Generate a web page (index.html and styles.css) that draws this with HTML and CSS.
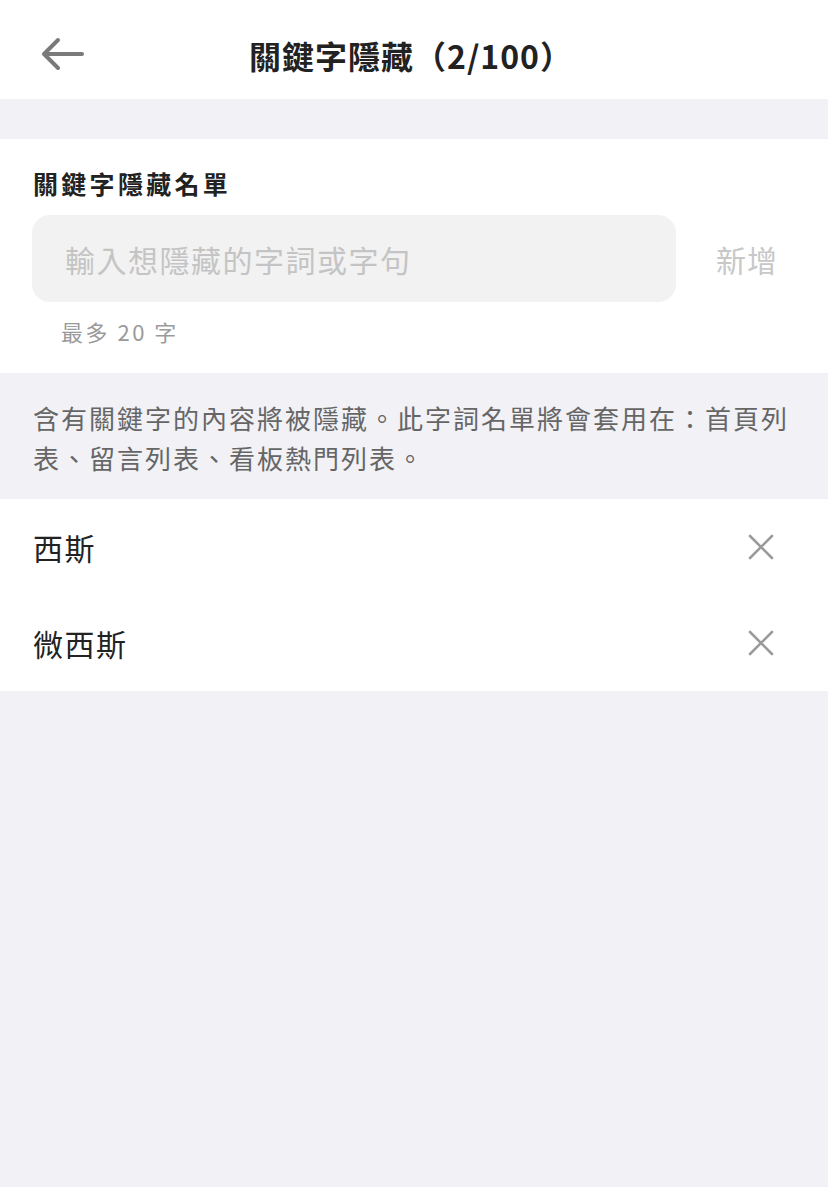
FILE: index.html
```html
<!DOCTYPE html>
<html lang="zh-Hant">
<head>
    <meta charset="UTF-8">
    <meta name="viewport" content="width=device-width, initial-scale=1.0">
    <title>關鍵字隱藏</title>
    <link rel="stylesheet" href="styles.css">
</head>
<body>
    <header class="nav-bar">
        <button class="back-btn" aria-label="返回">
            <svg width="44" height="34" viewBox="0 0 44 34" fill="none" stroke="#7a7a7a" stroke-width="4" stroke-linecap="round" stroke-linejoin="round">
                <path d="M41 17H4"/>
                <path d="M17 3L3 17l14 14"/>
            </svg>
        </button>
        <h1 class="nav-title">關鍵字隱藏（2/100）</h1>
    </header>

    <div class="spacer"></div>

    <section class="keyword-form">
        <label class="form-label" for="keywordInput">關鍵字隱藏名單</label>
        <div class="input-row">
            <input type="text" id="keywordInput" class="keyword-input" placeholder="輸入想隱藏的字詞或字句">
            <button class="add-btn">新增</button>
        </div>
        <p class="hint">最多 20 字</p>
    </section>

    <p class="description">含有關鍵字的內容將被隱藏。此字詞名單將會套用在：首頁列表、留言列表、看板熱門列表。</p>

    <ul class="keyword-list">
        <li class="keyword-item">
            <span>西斯</span>
            <button class="remove-btn" aria-label="刪除">
                <svg width="26" height="26" viewBox="0 0 26 26" stroke="#9a9a9a" stroke-width="2.6" stroke-linecap="round">
                    <path d="M2 2l22 22M24 2L2 24"/>
                </svg>
            </button>
        </li>
        <li class="keyword-item">
            <span>微西斯</span>
            <button class="remove-btn" aria-label="刪除">
                <svg width="26" height="26" viewBox="0 0 26 26" stroke="#9a9a9a" stroke-width="2.6" stroke-linecap="round">
                    <path d="M2 2l22 22M24 2L2 24"/>
                </svg>
            </button>
        </li>
    </ul>
</body>
</html>
```

FILE: styles.css
```css
body {
    margin: 0;
    min-height: 100vh;
    background-color: #f1f1f6;
    font-family: "Noto Sans CJK TC", "Noto Sans", sans-serif;
    color: #222;
}
button {
    font-family: inherit;
    background: none;
    border: none;
    padding: 0;
    cursor: pointer;
}
.nav-bar {
    position: relative;
    height: 99px;
    background-color: #fff;
    display: flex;
    align-items: center;
    justify-content: center;
}
.back-btn {
    position: absolute;
    left: 41px;
    top: 37px;
    display: flex;
}
.nav-title {
    margin: 0 0 0 -6px;
    font-size: 32px;
    font-weight: 700;
    color: #222;
    line-height: 40px;
    padding-top: 10px;
    letter-spacing: 1px;
}
.spacer {
    height: 40px;
}
.keyword-form {
    background-color: #fff;
    padding: 26px 0 27px;
}
.form-label {
    display: block;
    padding-left: 33px;
    font-size: 25px;
    font-weight: 700;
    line-height: 36px;
    letter-spacing: 3.3px;
    color: #222;
}
.input-row {
    display: flex;
    align-items: center;
    gap: 40px;
    margin-top: 14px;
    padding: 0 50px 0 32px;
}
.keyword-input {
    flex: 1;
    min-width: 0;
    height: 87px;
    box-sizing: border-box;
    border: none;
    border-radius: 18px;
    background-color: #f2f2f2;
    padding: 0 20px 0 33px;
    font-family: inherit;
    font-size: 30px;
    letter-spacing: 1.5px;
    color: #222;
    outline: none;
}
.keyword-input::placeholder {
    color: #c4c4c4;
}
.add-btn {
    font-size: 30px;
    letter-spacing: 1px;
    color: #c8c8c8;
}
.hint {
    margin: 14px 0 0;
    padding-left: 61px;
    font-size: 22px;
    line-height: 30px;
    color: #9a9a9a;
    letter-spacing: 2.5px;
}
.description {
    margin: 0;
    padding: 25px 33px 21px;
    font-size: 26px;
    line-height: 40px;
    letter-spacing: 2px;
    color: #666;
}
.keyword-list {
    list-style: none;
    margin: 0;
    padding: 0;
    background-color: #fff;
}
.keyword-item {
    height: 96px;
    display: flex;
    align-items: center;
    justify-content: space-between;
    padding: 0 54px 0 33px;
    font-size: 30px;
    letter-spacing: 1.5px;
    color: #222;
}
.remove-btn {
    display: flex;
}
```
